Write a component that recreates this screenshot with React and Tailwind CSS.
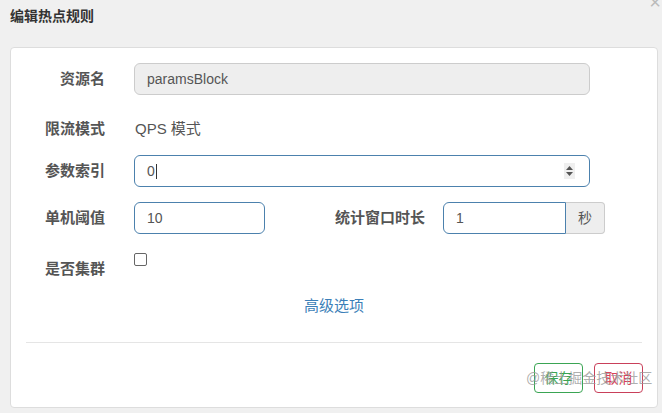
import React from "react";

const font = { fontFamily: '"Liberation Sans", Arial, "Noto Sans CJK SC", sans-serif' };

function Label({ children, className = "" }) {
  return (
    <div className={`w-[94px] shrink-0 text-right text-[15px] font-semibold text-[#555] ${className}`}>
      {children}
    </div>
  );
}

export default function App() {
  return (
    <div className="relative h-[413px] w-[662px] overflow-hidden bg-[#f0f0f0]" style={font}>
      <div className="absolute right-[1px] top-[-8px] text-[20px] leading-none text-[#bbb]">×</div>
      <div className="pl-[10px] pt-[6px] text-[14px] font-bold leading-[20px] text-[#333]">编辑热点规则</div>
      <div className="relative ml-[10px] mt-[21px] h-[361px] w-[648px] rounded-[4px] border border-[#ddd] bg-white">
        <div className="flex flex-col pt-[15px]">
          <div className="flex h-8 items-center">
            <Label>资源名</Label>
            <div className="ml-[29px] flex h-8 w-[456px] items-center rounded-[6px] border border-[#ccc] bg-[#eee] px-[12px] text-[14px] text-[#555]">
              paramsBlock
            </div>
          </div>
          <div className="mt-[17px] flex h-[34px] items-center">
            <Label>限流模式</Label>
            <div className="ml-[30px] text-[15px] text-[#555]">QPS 模式</div>
          </div>
          <div className="mt-[9px] flex h-8 items-center">
            <Label>参数索引</Label>
            <div className="ml-[29px] flex h-8 w-[456px] items-center justify-between rounded-[6px] border border-[#4c81ad] bg-white pl-[12px] pr-[14px] text-[14px] text-[#555]">
              <span className="flex items-center">0<span className="ml-[1px] inline-block h-[15px] w-px bg-[#333]"></span></span>
              <svg width="11" height="16" viewBox="0 0 11 16" className="bg-[#efefef]">
                <path d="M2 7 L5.5 3 L9 7 Z" fill="#555" />
                <path d="M2 9 L5.5 13 L9 9 Z" fill="#555" />
              </svg>
            </div>
          </div>
          <div className="mt-[15px] flex h-[32px] items-center">
            <Label>单机阈值</Label>
            <div className="ml-[29px] flex h-[32px] w-[131px] items-center rounded-[6px] border border-[#4c81ad] px-[12px] text-[14px] text-[#555]">
              10
            </div>
            <div className="ml-[70px] w-[92px] text-[15px] font-semibold text-[#555]">统计窗口时长</div>
            <div className="ml-[16px] flex h-[32px]">
              <div className="flex w-[123px] items-center rounded-l-[6px] border border-[#4c81ad] px-[12px] text-[14px] text-[#555]">
                1
              </div>
              <div className="flex w-[39px] items-center justify-center rounded-r-[4px] border border-l-0 border-[#ccc] bg-[#eee] text-[14px] text-[#555]">
                秒
              </div>
            </div>
          </div>
          <div className="mt-[18px] flex items-start">
            <Label className="pt-[7px] leading-[20px]">是否集群</Label>
            <div className="ml-[29px] mt-[1px] h-[13px] w-[13px] rounded-[2px] border border-[#666] bg-white"></div>
          </div>
          <div className="mt-[17px] text-center text-[15px] leading-[20px] text-[#3c7fb8]">
            高级选项
          </div>
          <div className="mx-[15px] mt-[26px] h-px bg-[#e5e5e5]"></div>
          <div className="mt-[20px] flex justify-end gap-[11px] pr-[14px]">
            <div className="flex h-[30px] w-[49px] items-center justify-center rounded-[4px] border border-[#3aa553] text-[14px] text-[#3aa553]">保存</div>
            <div className="flex h-[30px] w-[49px] items-center justify-center rounded-[4px] border border-[#c9405a] text-[14px] text-[#d9435a]">取消</div>
          </div>
        </div>
        <div className="pointer-events-none absolute left-[515px] top-[321px] text-[14px] leading-[18px] text-[#999]/80">
          @稀土掘金技术社区
        </div>
      </div>
    </div>
  );
}
